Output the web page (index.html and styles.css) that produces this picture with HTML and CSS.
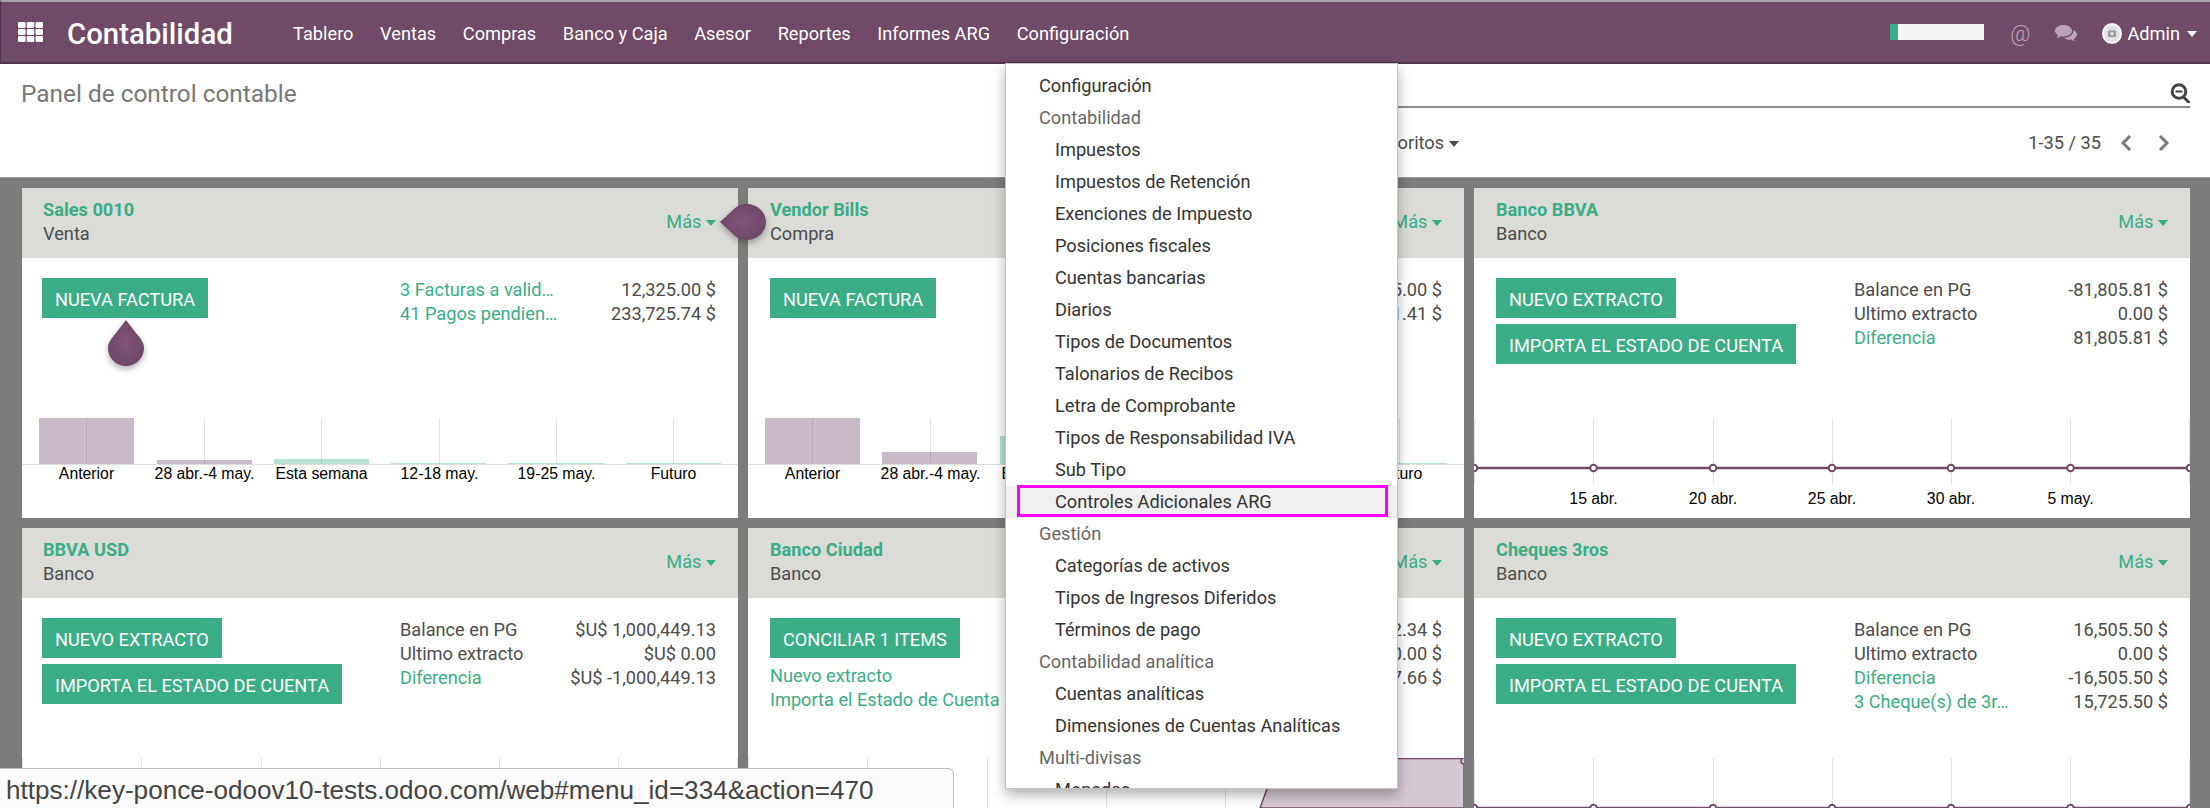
FILE: index.html
```html
<!DOCTYPE html>
<html lang="es">
<head>
    <meta charset="UTF-8">
    <title>Panel de control contable</title>
    <link rel="stylesheet" href="styles.css">
</head>
<body>
    <nav class="navbar">
        <svg class="apps-icon" width="25" height="20" viewBox="0 0 25 20">
            <g fill="#fff">
                <rect x="0" y="0" width="7.500" height="6" rx="1.200"/><rect x="8.750" y="0" width="7.500" height="6" rx="1.200"/><rect x="17.500" y="0" width="7.500" height="6" rx="1.200"/>
                <rect x="0" y="7" width="7.500" height="6" rx="1.200"/><rect x="8.750" y="7" width="7.500" height="6" rx="1.200"/><rect x="17.500" y="7" width="7.500" height="6" rx="1.200"/>
                <rect x="0" y="14" width="7.500" height="6" rx="1.200"/><rect x="8.750" y="14" width="7.500" height="6" rx="1.200"/><rect x="17.500" y="14" width="7.500" height="6" rx="1.200"/>
            </g>
        </svg>
        <span class="brand">Contabilidad</span>
        <ul class="nav-menu">
            <li>Tablero</li>
            <li>Ventas</li>
            <li>Compras</li>
            <li>Banco y Caja</li>
            <li>Asesor</li>
            <li>Reportes</li>
            <li>Informes ARG</li>
            <li>Configuración</li>
        </ul>
        <div class="nav-right">
            <div class="progress"><div class="progress-fill"></div></div>
            <span class="at-icon">@</span>
            <svg class="chat-icon" width="22" height="18" viewBox="0 0 22 18">
                <path fill="#b9a4b5" d="M8.500 0C3.800 0 0 2.600 0 5.800c0 1.800 1.200 3.400 3 4.500-.2 1-.8 1.800-1.500 2.500 1.600-.1 3.100-.7 4.400-1.600.8.200 1.700.3 2.600.3 4.700 0 8.500-2.600 8.500-5.700S13.200 0 8.500 0z"/>
                <path fill="#b9a4b5" d="M18.300 5.200c.1.200.1.400.1.600 0 3.800-4 6.800-9.300 7.100 1.400 1.200 3.200 1.900 5.200 1.900.6 0 1.200-.1 1.800-.2 1.100.9 2.400 1.500 3.900 1.700-.6-.7-1.100-1.500-1.300-2.300C20.500 13 22 11.400 22 9.500c0-1.800-1.500-3.300-3.700-4.300z"/>
            </svg>
            <svg class="avatar" width="20" height="21" viewBox="0 0 20 21">
                <ellipse cx="10" cy="10.500" rx="10" ry="10.500" fill="#fbfafb"/>
                <ellipse cx="10" cy="10.500" rx="8" ry="8.500" fill="#e4e1e3"/>
                <rect x="6" y="7.500" width="8" height="6.500" rx="1" fill="#9d989b"/>
                <circle cx="10" cy="10.700" r="1.800" fill="#e4e1e3"/>
            </svg>
            <span class="user-name">Admin</span>
            <span class="caret caret-white"></span>
        </div>
    </nav>

    <header class="control-panel">
        <div class="cp-left">
            <h1 class="cp-title">Panel de control contable</h1>
        </div>
        <div class="cp-right">
            <div class="search-box">
                <svg class="search-icon" width="21" height="20" viewBox="0 0 21 20">
                    <circle cx="9" cy="8.500" r="6.800" fill="none" stroke="#444" stroke-width="3"/>
                    <rect x="5.500" y="7.500" width="7" height="2" fill="#444"/>
                    <path d="M13.500 14l5 5" stroke="#444" stroke-width="3" stroke-linecap="round"/>
                </svg>
            </div>
            <div class="cp-tools">
                <div class="search-options">
                    <span class="option">Filtros <span class="caret caret-gray"></span></span>
                    <span class="option">Agrupar por <span class="caret caret-gray"></span></span>
                    <span class="option">Favoritos <span class="caret caret-gray"></span></span>
                </div>
                <div class="pager">
                    <span class="pager-value">1-35 / 35</span>
                    <svg class="pager-arrow" width="12" height="16" viewBox="0 0 12 16"><path d="M10 1L3 8l7 7" fill="none" stroke="#7b7b7b" stroke-width="3"/></svg>
                    <svg class="pager-arrow" width="12" height="16" viewBox="0 0 12 16"><path d="M2 1l7 7-7 7" fill="none" stroke="#7b7b7b" stroke-width="3"/></svg>
                </div>
            </div>
        </div>
    </header>

    <main class="dashboard">
        <!-- row 1 -->
        <section class="card">
            <div class="card-head">
                <div><div class="card-title">Sales 0010</div><div class="card-type">Venta</div></div>
                <span class="more">Más <span class="caret caret-green"></span></span>
            </div>
            <div class="card-body">
                <div class="actions"><button class="btn">NUEVA FACTURA</button></div>
                <div class="stats">
                    <div class="stat"><span class="link">3 Facturas a valid…</span><span>12,325.00 $</span></div>
                    <div class="stat"><span class="link">41 Pagos pendien…</span><span>233,725.74 $</span></div>
                </div>
            </div>
            <svg class="chart" width="716" height="100" viewBox="0 0 716 100">
                <g class="grid"><path d="M64.500 0v46M182.500 0v46M299.500 0v46M417.500 0v46M534.500 0v46M651.500 0v46"/></g>
                <g class="bars-past"><rect x="17" y="0" width="95" height="46"/><rect x="135" y="42" width="95" height="4"/></g>
                <g class="bars-now"><rect x="252" y="41" width="95" height="5"/><rect x="369" y="45" width="95" height="1"/><rect x="486" y="45" width="96" height="1"/><rect x="604" y="45" width="95" height="1"/></g>
                <path class="axis" d="M0 46.500h716"/>
                <g class="labels"><text x="64.500" y="61">Anterior</text><text x="182.500" y="61">28 abr.-4 may.</text><text x="299.500" y="61">Esta semana</text><text x="417.500" y="61">12-18 may.</text><text x="534.500" y="61">19-25 may.</text><text x="651.500" y="61">Futuro</text></g>
            </svg>
        </section>

        <section class="card">
            <div class="card-head">
                <div><div class="card-title">Vendor Bills</div><div class="card-type">Compra</div></div>
                <span class="more">Más <span class="caret caret-green"></span></span>
            </div>
            <div class="card-body">
                <div class="actions"><button class="btn">NUEVA FACTURA</button></div>
                <div class="stats">
                    <div class="stat"><span></span><span>5.00 $</span></div>
                    <div class="stat"><span></span><span>1.41 $</span></div>
                </div>
            </div>
            <svg class="chart" width="716" height="100" viewBox="0 0 716 100">
                <g class="grid"><path d="M64.500 0v46M182.500 0v46M299.500 0v46M417.500 0v46M534.500 0v46M651.500 0v46"/></g>
                <g class="bars-past"><rect x="17" y="0" width="95" height="46"/><rect x="134" y="34" width="95" height="12"/></g>
                <g class="bars-now"><rect x="252" y="18" width="95" height="28"/><rect x="604" y="45" width="95" height="1"/></g>
                <path class="axis" d="M0 46.500h716"/>
                <g class="labels"><text x="64.500" y="61">Anterior</text><text x="182.500" y="61">28 abr.-4 may.</text><text x="299.500" y="61">Esta semana</text><text x="651.500" y="61">Futuro</text></g>
            </svg>
        </section>

        <section class="card">
            <div class="card-head">
                <div><div class="card-title">Banco BBVA</div><div class="card-type">Banco</div></div>
                <span class="more">Más <span class="caret caret-green"></span></span>
            </div>
            <div class="card-body">
                <div class="actions">
                    <button class="btn">NUEVO EXTRACTO</button>
                    <button class="btn">IMPORTA EL ESTADO DE CUENTA</button>
                </div>
                <div class="stats">
                    <div class="stat"><span>Balance en PG</span><span>-81,805.81 $</span></div>
                    <div class="stat"><span>Ultimo extracto</span><span>0.00 $</span></div>
                    <div class="stat"><span class="link">Diferencia</span><span>81,805.81 $</span></div>
                </div>
            </div>
            <svg class="chart" width="716" height="100" viewBox="0 0 716 100">
                <g class="grid"><path d="M0.500 0v67M119.500 0v67M239.500 0v67M358.500 0v67M477.500 0v67M596.500 0v67M715.500 0v67"/></g>
                <path class="line" d="M0 50h716"/>
                <g class="dots"><circle cx="0" cy="50" r="3.300"/><circle cx="119.500" cy="50" r="3.300"/><circle cx="239" cy="50" r="3.300"/><circle cx="358" cy="50" r="3.300"/><circle cx="477" cy="50" r="3.300"/><circle cx="596.500" cy="50" r="3.300"/><circle cx="716" cy="50" r="3.300"/></g>
                <g class="labels"><text x="119.500" y="86">15 abr.</text><text x="239" y="86">20 abr.</text><text x="358" y="86">25 abr.</text><text x="477" y="86">30 abr.</text><text x="596.500" y="86">5 may.</text></g>
            </svg>
        </section>

        <!-- row 2 -->
        <section class="card">
            <div class="card-head">
                <div><div class="card-title">BBVA USD</div><div class="card-type">Banco</div></div>
                <span class="more">Más <span class="caret caret-green"></span></span>
            </div>
            <div class="card-body">
                <div class="actions">
                    <button class="btn">NUEVO EXTRACTO</button>
                    <button class="btn">IMPORTA EL ESTADO DE CUENTA</button>
                </div>
                <div class="stats">
                    <div class="stat"><span>Balance en PG</span><span>$U$ 1,000,449.13</span></div>
                    <div class="stat"><span>Ultimo extracto</span><span>$U$ 0.00</span></div>
                    <div class="stat"><span class="link">Diferencia</span><span>$U$ -1,000,449.13</span></div>
                </div>
            </div>
            <svg class="chart" width="716" height="100" viewBox="0 0 716 100">
                <g class="grid"><path d="M0.500 0v67M119.500 0v67M239.500 0v67M358.500 0v67M477.500 0v67M596.500 0v67M715.500 0v67"/></g>
                <path class="line" d="M0 50h716"/>
            </svg>
        </section>

        <section class="card">
            <div class="card-head">
                <div><div class="card-title">Banco Ciudad</div><div class="card-type">Banco</div></div>
                <span class="more">Más <span class="caret caret-green"></span></span>
            </div>
            <div class="card-body">
                <div class="actions">
                    <button class="btn">CONCILIAR 1 ITEMS</button>
                    <a class="action-link">Nuevo extracto</a>
                    <a class="action-link">Importa el Estado de Cuenta</a>
                </div>
                <div class="stats">
                    <div class="stat"><span></span><span>2.34 $</span></div>
                    <div class="stat"><span></span><span>0.00 $</span></div>
                    <div class="stat"><span></span><span>7.66 $</span></div>
                </div>
            </div>
            <svg class="chart" width="716" height="100" viewBox="0 0 716 100">
                <g class="grid"><path d="M0.500 0v67M119.500 0v67M239.500 0v67M358.500 0v67M477.500 0v67M596.500 0v67M715.500 0v67"/></g>
                <path class="area" d="M512 50L530 0.500H714L716 3V50z"/>
                <circle class="corner-dot" cx="716" cy="3" r="3"/>
            </svg>
        </section>

        <section class="card">
            <div class="card-head">
                <div><div class="card-title">Cheques 3ros</div><div class="card-type">Banco</div></div>
                <span class="more">Más <span class="caret caret-green"></span></span>
            </div>
            <div class="card-body">
                <div class="actions">
                    <button class="btn">NUEVO EXTRACTO</button>
                    <button class="btn">IMPORTA EL ESTADO DE CUENTA</button>
                </div>
                <div class="stats">
                    <div class="stat"><span>Balance en PG</span><span>16,505.50 $</span></div>
                    <div class="stat"><span>Ultimo extracto</span><span>0.00 $</span></div>
                    <div class="stat"><span class="link">Diferencia</span><span>-16,505.50 $</span></div>
                    <div class="stat"><span class="link">3 Cheque(s) de 3r…</span><span>15,725.50 $</span></div>
                </div>
            </div>
            <svg class="chart" width="716" height="100" viewBox="0 0 716 100">
                <g class="grid"><path d="M0.500 0v67M119.500 0v67M239.500 0v67M358.500 0v67M477.500 0v67M596.500 0v67M715.500 0v67"/></g>
                <path class="line" d="M0 50h716"/>
                <g class="dots"><circle cx="0" cy="50" r="3.300"/><circle cx="119.500" cy="50" r="3.300"/><circle cx="239" cy="50" r="3.300"/><circle cx="358" cy="50" r="3.300"/><circle cx="477" cy="50" r="3.300"/><circle cx="596.500" cy="50" r="3.300"/><circle cx="716" cy="50" r="3.300"/></g>
            </svg>
        </section>
    </main>

    <!-- open dropdown of Configuración -->
    <ul class="dropdown">
        <li class="top">Configuración</li>
        <li class="top group">Contabilidad</li>
        <li>Impuestos</li>
        <li>Impuestos de Retención</li>
        <li>Exenciones de Impuesto</li>
        <li>Posiciones fiscales</li>
        <li>Cuentas bancarias</li>
        <li>Diarios</li>
        <li>Tipos de Documentos</li>
        <li>Talonarios de Recibos</li>
        <li>Letra de Comprobante</li>
        <li>Tipos de Responsabilidad IVA</li>
        <li>Sub Tipo</li>
        <li class="active">Controles Adicionales ARG</li>
        <li class="top group">Gestión</li>
        <li>Categorías de activos</li>
        <li>Tipos de Ingresos Diferidos</li>
        <li>Términos de pago</li>
        <li class="top group">Contabilidad analítica</li>
        <li>Cuentas analíticas</li>
        <li>Dimensiones de Cuentas Analíticas</li>
        <li class="top group">Multi-divisas</li>
        <li>Monedas</li>
    </ul>

    <!-- tutorial tips -->
    <svg class="tip tip-left" width="50" height="42" viewBox="0 0 50 42">
        <defs>
            <radialGradient id="tipLeftFill"><stop offset="0" stop-color="#825478"/><stop offset="1" stop-color="#6f4868"/></radialGradient>
        </defs>
        <path fill="url(#tipLeftFill)" d="M1 19L14 7C18 3 22 1 28 1C38 1 47 9 47 19C47 29 38 37 28 37C22 37 18 35 14 31z"/>
    </svg>
    <svg class="tip tip-down" width="42" height="52" viewBox="0 0 42 52">
        <defs>
            <radialGradient id="tipDownFill"><stop offset="0" stop-color="#825478"/><stop offset="1" stop-color="#6f4868"/></radialGradient>
        </defs>
        <path fill="url(#tipDownFill)" d="M21 1L31 14C35 19 39 23 39 29C39 39 31 47 21 47C11 47 3 39 3 29C3 23 7 19 11 14z"/>
    </svg>

    <div class="status-bar">https://key-ponce-odoov10-tests.odoo.com/web#menu_id=334&amp;action=470</div>
</body>
</html>
```

FILE: styles.css
```css
/* Base */
html, body {
    margin: 0;
    height: 808px;
    overflow: hidden;
}

body {
    position: relative;
    font-family: Roboto, sans-serif;
    font-size: 18.2px;
    color: #4c4c4c;
    background-color: #fff;
}

ul {
    list-style: none;
    margin: 0;
    padding: 0;
}

/* Top bar */
.navbar {
    display: flex;
    align-items: center;
    box-sizing: border-box;
    height: 64px;
    padding: 3px 13px 0 18px;
    color: #fff;
    background-color: #714a67;
    border-top: 2px solid #a9a2a7;
    border-bottom: 2px solid #53354c;
    border-left: 1px solid #53354c;
}

.apps-icon {
    flex: none;
    margin: -3px 0 0 -1px;
}

.brand {
    margin-left: 24px;
    font-size: 29.4px;
    font-weight: 500;
}

.nav-menu {
    display: flex;
    margin-left: 47px;
}

.nav-menu li {
    padding: 0 13.3px;
}

.nav-right {
    display: flex;
    align-items: center;
    margin-left: auto;
}

.progress {
    width: 94px;
    height: 16px;
    margin-top: -3px;
    background-color: #f5f5f5;
}

.progress-fill {
    width: 8px;
    height: 100%;
    background-color: #3aad87;
}

.at-icon {
    margin-left: 26px;
    font-size: 22px;
    font-weight: 300;
    color: #b9a4b5;
}

.chat-icon {
    margin-left: 25px;
}

.avatar {
    margin-left: 25px;
}

.user-name {
    margin-left: 5px;
}

/* Carets */
.caret {
    display: inline-block;
    width: 0;
    height: 0;
    vertical-align: middle;
    border-top: 6px solid;
    border-left: 5px solid transparent;
    border-right: 5px solid transparent;
}

.caret-white {
    margin-left: 7px;
    color: #fff;
}

.caret-gray {
    color: #4c4c4c;
}

.caret-green {
    color: #3aad87;
}

/* Control panel */
.control-panel {
    display: flex;
    box-sizing: border-box;
    height: 113px;
    padding: 0 20px 0 21px;
}

.cp-left {
    width: 1084px;
}

.cp-title {
    margin: 15px 0 0;
    font-size: 24.4px;
    font-weight: 400;
    color: #777;
}

.cp-right {
    flex: 1;
}

.search-box {
    display: flex;
    justify-content: flex-end;
    box-sizing: border-box;
    height: 44px;
    padding-top: 19px;
    border-bottom: 2px solid #8a8a8a;
}

.search-icon {
    margin-right: -1px;
}

.cp-tools {
    display: flex;
    justify-content: space-between;
    align-items: center;
    margin-top: 24px;
}

.search-options {
    display: flex;
    gap: 22px;
    padding-left: 45px;
}

.pager {
    display: flex;
    align-items: center;
    padding-right: 20px;
}

.pager-arrow {
    margin-left: 19px;
}

.pager-arrow + .pager-arrow {
    margin-left: 26px;
}

/* Cards */
.dashboard {
    display: grid;
    grid-template-columns: repeat(3, 716px);
    grid-auto-rows: 330px;
    gap: 10px;
    box-sizing: border-box;
    height: 631px;
    padding: 11px 20px 0 22px;
    background-color: #7c7c7c;
    box-shadow: inset 0 1px 0 #9a9a9a;
}

.card {
    display: flex;
    flex-direction: column;
    background-color: #fff;
}

.card-head {
    display: flex;
    justify-content: space-between;
    align-items: center;
    box-sizing: border-box;
    height: 70px;
    padding: 0 22px 4px 22px;
    background-color: #dbdcd7;
}

.card:nth-child(3n+1) .card-head {
    padding-left: 21px;
}

.card-title {
    font-weight: 700;
    line-height: 25px;
    color: #3aad87;
}

.card-type {
    margin-top: -1px;
    line-height: 25px;
}

.more {
    color: #3aad87;
}

.card-body {
    display: flex;
    box-sizing: border-box;
    height: 160px;
    padding: 20px 22px 0 22px;
}

.card:nth-child(3n+1) .card-body {
    padding-left: 20px;
}

.actions {
    display: flex;
    flex-direction: column;
    align-items: flex-start;
    gap: 6px;
    width: 358px;
}

.btn {
    height: 40px;
    padding: 2px 13px 0;
    font-family: inherit;
    font-size: 18.2px;
    color: #fff;
    background-color: #3aad87;
    border: none;
}

.action-link {
    line-height: 24px;
    color: #3aad87;
}

.action-link + .action-link {
    margin-top: -6px;
}

.stats {
    flex: 1;
}

.stat {
    display: flex;
    justify-content: space-between;
    line-height: 24px;
}

.link {
    color: #3aad87;
}

/* Charts */
.chart {
    display: block;
    flex: none;
}

.grid path {
    fill: none;
    stroke: #e3e3e3;
    stroke-width: 1;
}

.axis {
    fill: none;
    stroke: #dedede;
}

.bars-past rect {
    fill: rgba(113, 74, 110, 0.38);
}

.bars-now rect {
    fill: rgba(58, 173, 135, 0.36);
}

.labels text {
    font-family: "Liberation Sans", Arial, sans-serif;
    font-size: 15.8px;
    text-anchor: middle;
    fill: #000;
}

.line {
    fill: none;
    stroke: #714a67;
    stroke-width: 2.4;
}

.dots circle {
    fill: #fff;
    stroke: #714a67;
    stroke-width: 2;
}

.area {
    fill: #d4c8d2;
    stroke: #714a67;
    stroke-width: 1.5;
}

.corner-dot {
    fill: #d4c8d2;
    stroke: #714a67;
    stroke-width: 1.5;
}

/* Dropdown */
.dropdown {
    position: absolute;
    left: 1005px;
    top: 63px;
    box-sizing: border-box;
    width: 393px;
    height: 726px;
    padding: 6px 0;
    overflow: hidden;
    color: #333;
    background-color: #fff;
    border: 1px solid #c4c4c4;
    box-shadow: 0 6px 12px rgba(0, 0, 0, 0.3);
}

.dropdown li {
    height: 32px;
    line-height: 32px;
    padding-left: 49px;
}

.dropdown li.top {
    padding-left: 33px;
}

.dropdown li.group {
    color: #666;
}

.dropdown li.active {
    position: relative;
    background-color: #f0f0f0;
}

.dropdown li.active::after {
    content: "";
    position: absolute;
    left: 11px;
    right: 9px;
    top: -1px;
    bottom: 1px;
    border: 3px solid #ff00ff;
}

/* Tutorial tips */
.tip {
    position: absolute;
    filter: drop-shadow(0 3px 3px rgba(0, 0, 0, 0.3));
}

.tip-left {
    left: 719px;
    top: 203px;
}

.tip-down {
    left: 105px;
    top: 319px;
}

/* Browser status bar */
.status-bar {
    position: absolute;
    left: 0;
    top: 768px;
    box-sizing: border-box;
    width: 954px;
    height: 40px;
    padding-left: 6px;
    font-family: "Liberation Sans", Arial, sans-serif;
    font-size: 26.1px;
    line-height: 42px;
    color: #444;
    background-color: #fbfbfb;
    border-top: 1px solid #bdbdbd;
    border-right: 1px solid #bdbdbd;
    border-top-right-radius: 6px;
}
```
